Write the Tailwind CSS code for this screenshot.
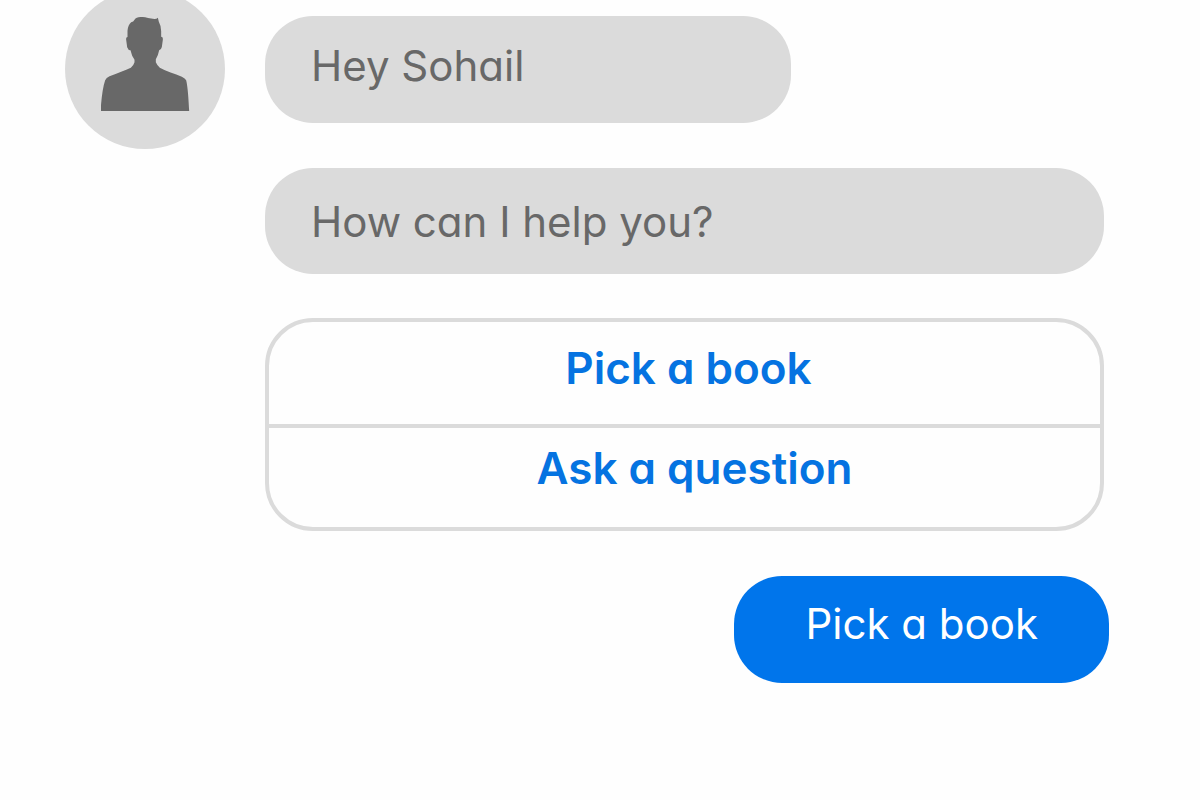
<!DOCTYPE html>
<html lang="en">
<head>
<meta charset="utf-8">
<meta name="viewport" content="width=device-width, initial-scale=1">
<title>Chat</title>
<script src="https://cdn.jsdelivr.net/npm/@tailwindcss/browser@4"></script>
</head>
<body class="min-h-screen overflow-x-hidden bg-[#fefefe] font-['Inter',sans-serif] text-[42px] leading-[52px] text-[#686868] [font-feature-settings:'cv11']">
<main class="flex items-start gap-10 pr-24 pl-[65px]">
  <div class="-mt-[11px] flex size-40 shrink-0 justify-center rounded-full bg-[#dbdbdb] pt-7" role="img" aria-label="Assistant">
    <svg class="h-[94px] w-[89px]" viewBox="153 51 266 282" fill="#686868" aria-hidden="true">
      <path d="M151 333 C154 293 158 262 165 241 Q168 233 178 229 C203 218 225 212 242 203 Q250 198 253 187 L253 179 L246 167 L241 151 Q234 151 231 142 L228 119 Q227 111 232 111 L232 92 Q234 74 243 67 Q250 66 253 59 Q258 51 271 51 C282 50 296 55 313 57 Q320 57 323 53 L326 65 Q333 77 333 94 L333 110 Q339 110 338 119 L335 141 Q333 150 327 151 Q324 167 317 178 L317 187 Q321 197 329 203 C348 213 374 221 395 230 Q405 235 408 241 C413 262 415 295 417 333 Z"/>
    </svg>
  </div>
  <div class="flex min-w-0 flex-1 flex-col items-start pt-4">
    <p class="w-[62.7%] rounded-[48px] bg-[#dbdbdb] px-[46px] pt-6 pb-[31px]">Hey Sohail</p>
    <p class="mt-[45px] w-full rounded-[48px] bg-[#dbdbdb] px-[46px] pt-[28px] pb-[26px]">How can I help you?</p>
    <div class="mt-11 flex w-full flex-col divide-y-4 divide-[#dbdbdb] rounded-[48px] border-4 border-[#dbdbdb] text-[44px] font-semibold text-[#0573e1]">
      <button type="button" class="cursor-pointer pt-5 pb-[30px] pl-2">Pick a book</button>
      <button type="button" class="cursor-pointer pt-[14px] pb-[33px] pl-5">Ask a question</button>
    </div>
    <p class="mt-[45px] -mr-[5px] self-end rounded-[48px] bg-[#0075eb] px-[71px] pt-[22px] pb-[33px] text-white">Pick a book</p>
  </div>
</main>
</body>
</html>
